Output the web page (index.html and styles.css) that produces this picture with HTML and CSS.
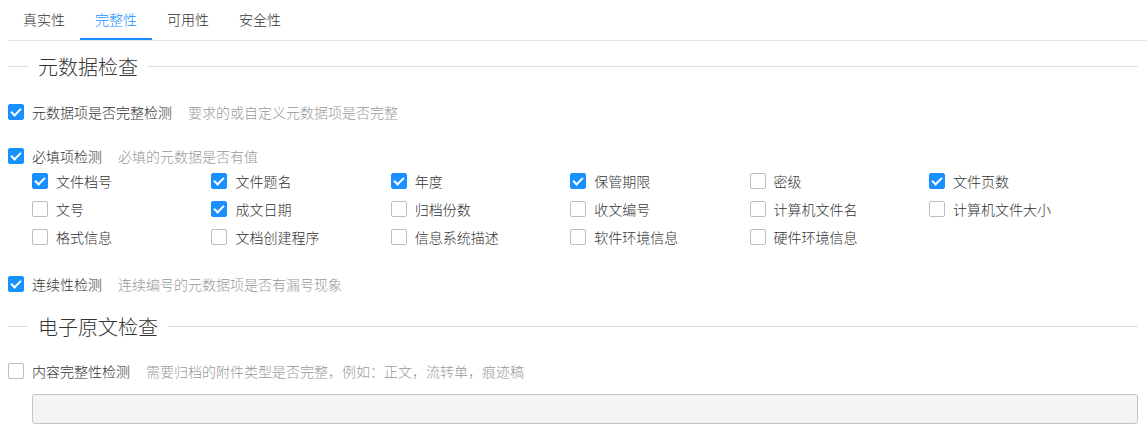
FILE: index.html
```html
<!DOCTYPE html>
<html lang="zh-CN">
<head>
    <meta charset="UTF-8">
    <meta name="viewport" content="width=device-width, initial-scale=1.0">
    <title>完整性检查</title>
    <link rel="stylesheet" href="styles.css">
</head>
<body>

    <!-- Tabs -->
    <div class="tabs">
        <div class="tab">真实性</div>
        <div class="tab active">完整性</div>
        <div class="tab">可用性</div>
        <div class="tab">安全性</div>
    </div>

    <div class="panel">
        <div class="divider"><span>元数据检查</span></div>

        <div class="check-row row-first">
            <span class="box checked"></span>
            <span class="label">元数据项是否完整检测</span>
            <span class="desc">要求的或自定义元数据项是否完整</span>
        </div>

        <div class="check-row row-next">
            <span class="box checked"></span>
            <span class="label">必填项检测</span>
            <span class="desc">必填的元数据是否有值</span>
        </div>

        <!-- Required fields -->
        <div class="field-grid">
            <div class="field"><span class="box checked"></span>文件档号</div>
            <div class="field"><span class="box checked"></span>文件题名</div>
            <div class="field"><span class="box checked"></span>年度</div>
            <div class="field"><span class="box checked"></span>保管期限</div>
            <div class="field"><span class="box"></span>密级</div>
            <div class="field"><span class="box checked"></span>文件页数</div>
            <div class="field"><span class="box"></span>文号</div>
            <div class="field"><span class="box checked"></span>成文日期</div>
            <div class="field"><span class="box"></span>归档份数</div>
            <div class="field"><span class="box"></span>收文编号</div>
            <div class="field"><span class="box"></span>计算机文件名</div>
            <div class="field"><span class="box"></span>计算机文件大小</div>
            <div class="field"><span class="box"></span>格式信息</div>
            <div class="field"><span class="box"></span>文档创建程序</div>
            <div class="field"><span class="box"></span>信息系统描述</div>
            <div class="field"><span class="box"></span>软件环境信息</div>
            <div class="field"><span class="box"></span>硬件环境信息</div>
        </div>

        <div class="check-row row-next">
            <span class="box checked"></span>
            <span class="label">连续性检测</span>
            <span class="desc">连续编号的元数据项是否有漏号现象</span>
        </div>

        <div class="divider divider-second"><span>电子原文检查</span></div>

        <div class="check-row row-content">
            <span class="box"></span>
            <span class="label">内容完整性检测</span>
            <span class="desc">需要归档的附件类型是否完整，例如：正文，流转单，痕迹稿</span>
        </div>

        <input class="text-input" type="text" disabled>
    </div>

</body>
</html>
```

FILE: styles.css
```css
body {
    margin: 0;
    padding-left: 8px;
    font-family: "Liberation Sans", "Noto Sans CJK SC", sans-serif;
    font-size: 14px;
    font-weight: 300;
    color: #333;
    background: #fff;
}

/* Tabs */
.tabs {
    display: flex;
    border-bottom: 1px solid #e4e4e4;
}

.tab {
    width: 72px;
    height: 40px;
    line-height: 41px;
    text-align: center;
    box-sizing: border-box;
    color: #333;
}

.tab.active {
    color: #1890ff;
    border-bottom: 2px solid #1890ff;
}

.panel {
    margin-right: 9px;
}

/* Section divider */
.divider {
    display: flex;
    align-items: center;
    margin-top: 11px;
    height: 28px;
    font-size: 20px;
    color: #333;
}

.divider::before,
.divider::after {
    content: '';
    height: 1px;
    background: #dcdcdc;
}

.divider::before {
    width: 20px;
}

.divider::after {
    flex: 1;
}

.divider span {
    padding: 0 10px;
}

.divider-second {
    margin-top: 17px;
}

/* Checkbox rows */
.check-row {
    display: flex;
    align-items: center;
    height: 22px;
}

.row-first {
    margin-top: 21px;
}

.row-next {
    margin-top: 22px;
}

.row-content {
    margin-top: 20px;
}

.label {
    margin-left: 8px;
}

.desc {
    margin-left: 16px;
    color: #999;
}

.box {
    position: relative;
    width: 16px;
    height: 16px;
    box-sizing: border-box;
    border: 1px solid #bdbdbd;
    border-radius: 2px;
    background: #fff;
    flex-shrink: 0;
}

.box.checked {
    background: #1890ff;
    border-color: #1890ff;
}

.box.checked::after {
    content: '';
    position: absolute;
    left: 4px;
    top: 1px;
    width: 4px;
    height: 8px;
    border: solid #fff;
    border-width: 0 2px 2px 0;
    transform: rotate(45deg);
}

/* Required field grid */
.field-grid {
    display: grid;
    grid-template-columns: repeat(6, 179.4px);
    grid-auto-rows: 28px;
    padding-left: 24px;
}

.field {
    display: flex;
    align-items: center;
    gap: 8px;
}

.text-input {
    display: block;
    width: calc(100% - 24px);
    height: 30px;
    margin: 12px 0 0 24px;
    box-sizing: border-box;
    border: 1px solid #c4c4c4;
    border-radius: 3px;
    background: #f4f4f4;
}
```
